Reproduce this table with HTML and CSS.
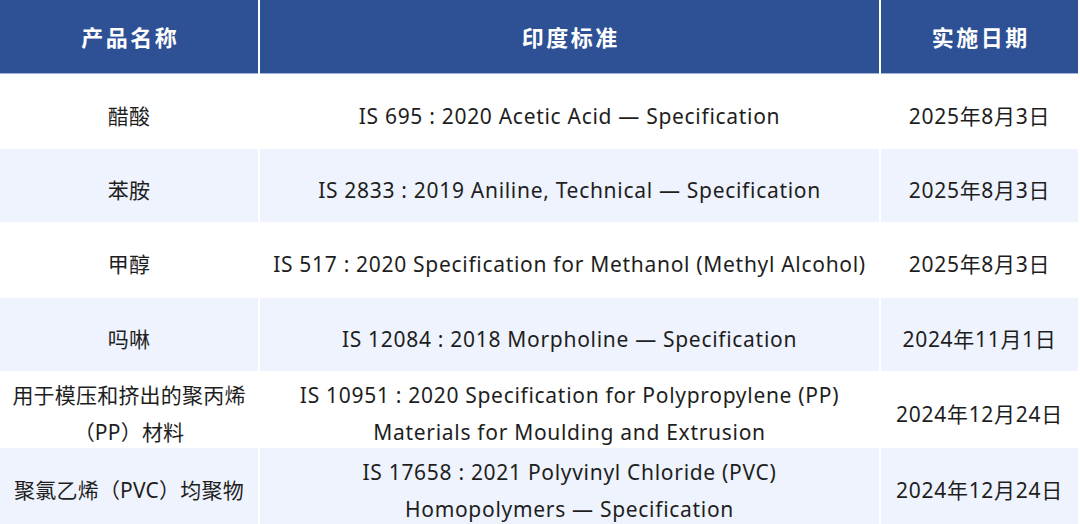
FILE: index.html
```html
<!DOCTYPE html>
<html lang="zh">
<head>
<meta charset="utf-8">
<link rel="stylesheet" href="styles.css">
</head>
<body>
<div class="table">
  <div class="th">产品名称</div>
  <div class="th">印度标准</div>
  <div class="th">实施日期</div>

  <div class="td name">醋酸</div>
  <div class="td">IS 695 : 2020 Acetic Acid — Specification</div>
  <div class="td">2025年8月3日</div>

  <div class="td name alt">苯胺</div>
  <div class="td alt">IS 2833 : 2019 Aniline, Technical — Specification</div>
  <div class="td alt">2025年8月3日</div>

  <div class="td name">甲醇</div>
  <div class="td">IS 517 : 2020 Specification for Methanol (Methyl Alcohol)</div>
  <div class="td">2025年8月3日</div>

  <div class="td name alt">吗啉</div>
  <div class="td alt">IS 12084 : 2018 Morpholine — Specification</div>
  <div class="td alt">2024年11月1日</div>

  <div class="td name">用于模压和挤出的聚丙烯<br>（PP）材料</div>
  <div class="td">IS 10951 : 2020 Specification for Polypropylene (PP)<br>Materials for Moulding and Extrusion</div>
  <div class="td">2024年12月24日</div>

  <div class="td name alt">聚氯乙烯（PVC）均聚物</div>
  <div class="td alt">IS 17658 : 2021 Polyvinyl Chloride (PVC)<br>Homopolymers — Specification</div>
  <div class="td alt">2024年12月24日</div>
</div>
</body>
</html>
```
FILE: styles.css
```css
html, body {
  margin: 0;
  padding: 0;
  background: #ffffff;
}
body {
  width: 1080px;
  height: 524px;
  overflow: hidden;
  font-family: "Noto Sans", "Noto Sans CJK SC", sans-serif;
  color: #1e1e1e;
}
.table {
  width: 1078px;
  display: grid;
  grid-template-columns: 258px 619px 197px;
  grid-template-rows: 74px 73px 73px 74px 73px 75px 76px;
  column-gap: 2px;
  row-gap: 1px;
  background: #ffffff;
}
.th {
  background: #2e5195;
  color: #ffffff;
  font-weight: 700;
  font-size: 22px;
  letter-spacing: 2.5px;
  padding: 0 0 3px 2.5px;
  display: flex;
  align-items: center;
  justify-content: center;
  box-shadow: inset 0 -1px 0 #9fb2d9;
}
.td {
  background: #ffffff;
  font-size: 21px;
  letter-spacing: 0.7px;
  line-height: 37px;
  display: flex;
  align-items: center;
  justify-content: center;
  text-align: center;
  padding: 9px 4px 0;
}
.td.name {
  letter-spacing: 0.2px;
}
.td.alt {
  background: #eef3fd;
}
```
